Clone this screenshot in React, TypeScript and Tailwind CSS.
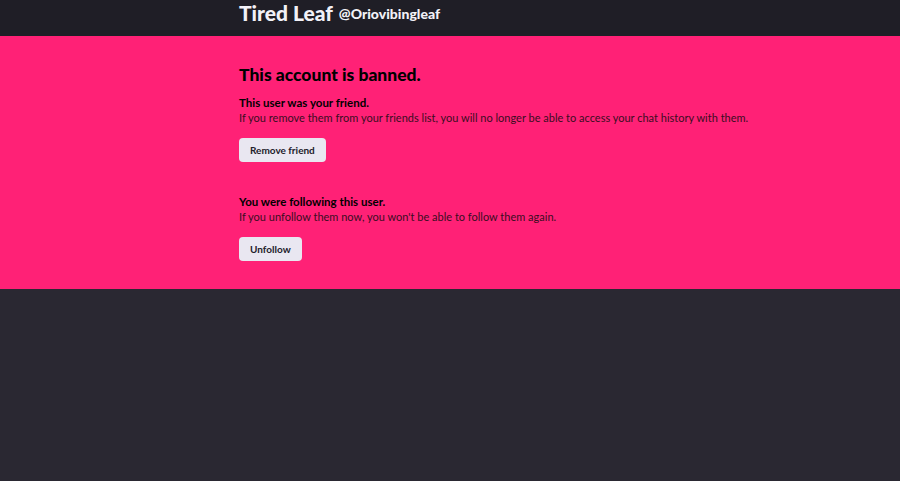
const sections = [
  {
    id: 'friend',
    title: 'This user was your friend.',
    text: 'If you remove them from your friends list, you will no longer be able to access your chat history with them.',
    action: 'Remove friend',
  },
  {
    id: 'follow',
    title: 'You were following this user.',
    text: "If you unfollow them now, you won't be able to follow them again.",
    action: 'Unfollow',
  },
];

const App = () => {
  return (
    <div className="min-h-[481px] bg-[#2a2832] font-['Lato',sans-serif]">
      <header className="h-9 bg-[#1f1e26]">
        <div className="mx-auto flex h-[26px] w-[422px] items-center gap-1.5">
          <h1 className="text-[21px] font-black text-[#f2f1f7]">Tired Leaf</h1>
          <span className="text-[14px] font-black text-[#f2f1f7]">@Oriovibingleaf</span>
        </div>
      </header>
      <main className="h-[253px] bg-[#ff2176] pt-[29px]">
        <div className="mx-auto w-[422px] text-[#1a0f16]">
          <h2 className="whitespace-nowrap text-[17.5px] font-black leading-5 text-black">This account is banned.</h2>
          <div className="mt-[10px] space-y-[32px]">
            {sections.map((s) => (
              <section key={s.id}>
                <h3 className="whitespace-nowrap text-[11.5px] font-bold leading-[15px] text-black">{s.title}</h3>
                <p className="whitespace-nowrap text-[11px] leading-4 text-[#3a0d22]">{s.text}</p>
                <button className="mt-[12px] h-6 rounded bg-[#e9e7f1] px-[11px] text-[10px] font-bold text-[#22202a]">
                  {s.action}
                </button>
              </section>
            ))}
          </div>
        </div>
      </main>
    </div>
  );
};

export default App;
